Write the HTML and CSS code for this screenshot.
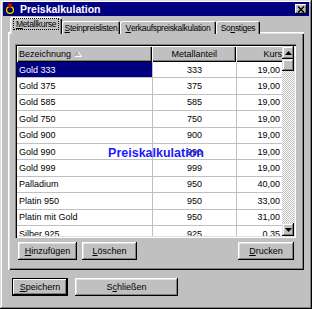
FILE: index.html
```html
<!DOCTYPE html>
<html lang="de">
<head>
  <meta charset="UTF-8">
  <title>Preiskalkulation</title>
  <link rel="stylesheet" href="styles.css">
</head>
<body>
  <div class="window">
    <!-- Titelleiste -->
    <div class="titlebar">
      <svg class="app-icon" viewBox="0 0 10 12" width="10" height="12">
        <circle cx="5" cy="7" r="3.4" fill="none" stroke="#000" stroke-width="2.6"/>
        <circle cx="5" cy="7" r="3.4" fill="none" stroke="#ffe000" stroke-width="1.2"/>
        <rect x="3" y="0.5" width="4" height="3" fill="#e00000" stroke="#600" stroke-width="0.6"/>
      </svg>
      <span class="title">Preiskalkulation</span>
      <span class="close-btn">
        <svg viewBox="0 0 8 7" width="8" height="7">
          <path d="M1 0.5 L7 6.5 M7 0.5 L1 6.5" stroke="#000" stroke-width="1.5"/>
        </svg>
      </span>
    </div>

    <div class="content">
      <div class="tabs">
        <div class="tab active tab-metall"><span class="focus"><u>M</u>etallkurse</span></div>
        <div class="tab tab-stein"><u>S</u>teinpreislisten</div>
        <div class="tab tab-verkauf"><u>V</u>erkaufspreiskalkulation</div>
        <div class="tab tab-sonst">So<u>n</u>stiges</div>
      </div>

      <div class="panel">
        <div class="grid">
          <div class="grid-main">
            <div class="grid-row grid-head">
              <div class="cell col-name">Bezeichnung
                <svg class="sort-icon" viewBox="0 0 8 6" width="8" height="6">
                  <path d="M4 0.5 L7.5 5.5 L0.5 5.5 Z" fill="none" stroke="#fff" stroke-width="1"/>
                  <path d="M4 0.5 L0.5 5.5" stroke="#808080" stroke-width="1"/>
                </svg>
              </div>
              <div class="cell col-anteil">Metallanteil</div>
              <div class="cell col-kurs">Kurs</div>
            </div>
            <div class="grid-row selected">
              <div class="cell col-name">Gold 333</div>
              <div class="cell col-anteil">333</div>
              <div class="cell col-kurs">19,00</div>
            </div>
            <div class="grid-row">
              <div class="cell col-name">Gold 375</div>
              <div class="cell col-anteil">375</div>
              <div class="cell col-kurs">19,00</div>
            </div>
            <div class="grid-row">
              <div class="cell col-name">Gold 585</div>
              <div class="cell col-anteil">585</div>
              <div class="cell col-kurs">19,00</div>
            </div>
            <div class="grid-row">
              <div class="cell col-name">Gold 750</div>
              <div class="cell col-anteil">750</div>
              <div class="cell col-kurs">19,00</div>
            </div>
            <div class="grid-row">
              <div class="cell col-name">Gold 900</div>
              <div class="cell col-anteil">900</div>
              <div class="cell col-kurs">19,00</div>
            </div>
            <div class="grid-row">
              <div class="cell col-name">Gold 990</div>
              <div class="cell col-anteil">990</div>
              <div class="cell col-kurs">19,00</div>
            </div>
            <div class="grid-row">
              <div class="cell col-name">Gold 999</div>
              <div class="cell col-anteil">999</div>
              <div class="cell col-kurs">19,00</div>
            </div>
            <div class="grid-row">
              <div class="cell col-name">Palladium</div>
              <div class="cell col-anteil">950</div>
              <div class="cell col-kurs">40,00</div>
            </div>
            <div class="grid-row">
              <div class="cell col-name">Platin 950</div>
              <div class="cell col-anteil">950</div>
              <div class="cell col-kurs">33,00</div>
            </div>
            <div class="grid-row">
              <div class="cell col-name">Platin mit Gold</div>
              <div class="cell col-anteil">950</div>
              <div class="cell col-kurs">31,00</div>
            </div>
            <div class="grid-row">
              <div class="cell col-name">Silber 925</div>
              <div class="cell col-anteil">925</div>
              <div class="cell col-kurs">0,35</div>
            </div>
          </div>

          <!-- Scrollbar -->
          <div class="vscroll">
            <div class="sb-btn">
              <svg viewBox="0 0 7 4" width="7" height="4"><path d="M3.5 0 L7 4 L0 4 Z" fill="#000"/></svg>
            </div>
            <div class="sb-thumb"></div>
            <div class="sb-track"></div>
            <div class="sb-btn">
              <svg viewBox="0 0 7 4" width="7" height="4"><path d="M0 0 L7 0 L3.5 4 Z" fill="#000"/></svg>
            </div>
          </div>
        </div>

        <div class="panel-buttons">
          <button class="btn btn-add"><u>H</u>inzufügen</button>
          <button class="btn btn-del"><u>L</u>öschen</button>
          <span class="spacer"></span>
          <button class="btn btn-print"><u>D</u>rucken</button>
        </div>

        <div class="watermark">Preiskalkulation</div>
      </div>

      <div class="dialog-buttons">
        <button class="btn btn-default btn-save"><u>S</u>peichern</button>
        <button class="btn btn-close">S<u>c</u>hließen</button>
      </div>
    </div>
  </div>
</body>
</html>
```

FILE: styles.css
```css
body {
  margin: 0;
  background: #c0c0c0;
  font-family: "Liberation Sans", Arial, sans-serif;
  font-size: 9px;
  color: #000;
}

.window {
  width: 312px;
  height: 309px;
  box-sizing: border-box;
  padding: 2px 3px 3px;
  background: #c0c0c0;
  box-shadow: inset -1px -1px #000, inset 1px 1px #dfdfdf,
              inset -2px -2px #808080, inset 2px 2px #fff;
}

/* Titelleiste */
.titlebar {
  height: 14px;
  background: #000080;
  color: #fff;
  display: flex;
  align-items: center;
  padding: 0 2px 0 2px;
}

.app-icon {
  margin-right: 5px;
}

.title {
  flex: 1;
  font-weight: bold;
  font-size: 10.5px;
}

.close-btn {
  width: 12px;
  height: 10px;
  background: #c0c0c0;
  display: flex;
  align-items: center;
  justify-content: center;
  box-shadow: inset -1px -1px #000, inset 1px 1px #fff, inset -2px -2px #808080;
}

/* Inhalt */
.content {
  padding: 3px 5px 0;
}

.tabs {
  display: flex;
  align-items: flex-end;
  height: 15px;
  padding-left: 2px;
  margin-bottom: -2px;
  position: relative;
  z-index: 1;
  font-size: 8.5px;
  letter-spacing: -0.3px;
}

.tab {
  height: 13px;
  box-sizing: border-box;
  display: flex;
  align-items: center;
  justify-content: center;
  background: #c0c0c0;
  white-space: nowrap;
  border-radius: 2px 2px 0 0;
  box-shadow: inset 1px 1px #fff, inset -1px 0 #000, inset -2px 0 #808080;
}

.tab.active {
  height: 17px;
  padding-bottom: 3px;
  box-shadow: inset 1px 1px #fff, inset 2px 2px #dfdfdf, inset -1px 0 #000, inset -2px 0 #808080;
}

.tab-metall { width: 52px; }
.tab-stein { width: 58px; }
.tab-verkauf { width: 96px; }
.tab-sonst { width: 44px; }

.focus {
  outline: 1px dotted #000;
  outline-offset: 0;
  padding: 0 2px;
}

.panel {
  position: relative;
  height: 238px;
  box-sizing: border-box;
  padding: 12px 8px 10px 7px;
  box-shadow: inset 1px 1px #fff, inset 2px 2px #dfdfdf,
              inset -1px -1px #000, inset -2px -2px #808080;
}

/* Tabelle */
.grid {
  height: 194px;
  box-sizing: border-box;
  padding: 2px;
  display: flex;
  background: #fff;
  box-shadow: inset 1px 1px #808080, inset 2px 2px #000,
              inset -1px -1px #fff, inset -2px -2px #dfdfdf;
}

.grid-main {
  flex: 1;
  overflow: hidden;
}

.grid-row {
  display: flex;
  height: 16.4px;
  box-sizing: border-box;
  border-bottom: 1px solid #c0c0c0;
  align-items: stretch;
}

.cell {
  box-sizing: border-box;
  border-right: 1px solid #c0c0c0;
  padding: 0 2px;
  display: flex;
  align-items: center;
  white-space: nowrap;
  overflow: hidden;
}

.col-name { width: 136px; }
.col-anteil { width: 84px; justify-content: center; }
.col-kurs { width: 44px; justify-content: flex-end; padding-right: 1px; border-right: none; }

.grid-head {
  height: 16px;
  border-bottom: none;
}

.grid-head .cell {
  background: #c0c0c0;
  border-right: none;
  box-shadow: inset 1px 1px #fff, inset -1px -1px #000, inset -2px -2px #808080;
}

.grid-head .col-kurs {
  width: 46px;
  padding-right: 0;
  box-shadow: inset 1px 1px #fff, inset 0 -1px #000, inset 0 -2px #808080;
}

.sort-icon {
  margin-left: 3px;
}

.grid-row.selected .col-name {
  background: #000080;
  color: #fff;
}

/* Scrollbar */
.vscroll {
  width: 12px;
  display: flex;
  flex-direction: column;
}

.sb-btn, .sb-thumb {
  height: 13px;
  background: #c0c0c0;
  display: flex;
  align-items: center;
  justify-content: center;
  box-shadow: inset -1px -1px #000, inset 1px 1px #dfdfdf,
              inset -2px -2px #808080, inset 2px 2px #fff;
}

.sb-thumb {
  height: 12px;
}

.sb-track {
  flex: 1;
  background: repeating-conic-gradient(#c0c0c0 0 25%, #fff 0 50%) 0 0 / 2px 2px;
}

/* Knoepfe */
.btn {
  height: 18px;
  border: none;
  padding: 0;
  background: #c0c0c0;
  font-family: inherit;
  font-size: 9px;
  color: #000;
  box-shadow: inset -1px -1px #000, inset 1px 1px #fff,
              inset -2px -2px #808080, inset 2px 2px #dfdfdf;
}

.panel-buttons {
  display: flex;
  margin-top: 4px;
  padding-left: 3px;
  gap: 5px;
}

.spacer { flex: 1; }

.btn-add { width: 59px; }
.btn-del { width: 55px; }
.btn-print { width: 56px; margin-right: 2px; }

.dialog-buttons {
  display: flex;
  gap: 7px;
  margin-top: 8px;
  padding-left: 4px;
}

.btn-save { width: 56px; }
.btn-close { width: 103px; }

.btn-default {
  box-shadow: inset 0 0 0 1px #000, inset -2px -2px #000, inset 2px 2px #fff,
              inset -3px -3px #808080;
}

.watermark {
  position: absolute;
  left: 0;
  right: 0;
  top: 114px;
  text-align: center;
  font-size: 12.5px;
  font-weight: bold;
  color: #1a1aff;
}
```
